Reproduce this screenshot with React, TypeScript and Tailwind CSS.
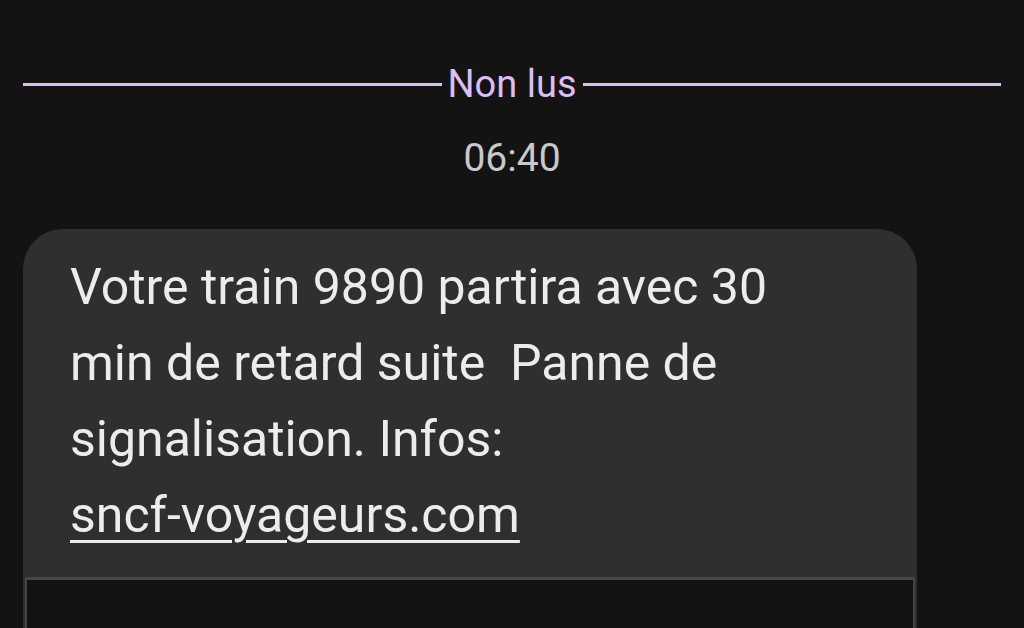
import React from 'react'

const message = {
  time: '06:40',
  lines: ['Votre train 9890 partira avec 30', 'min de retard suite  Panne de', 'signalisation. Infos:'],
  link: 'sncf-voyageurs.com',
}

const App = () => {
  return (
    <div className="w-[1024px] h-[628px] overflow-hidden bg-[#131313] font-['Roboto','Liberation_Sans',sans-serif]">
      {/* séparateur non lus */}
      <div className="flex items-center gap-[6px] px-[23px] pt-[62px]">
        <div className="flex-1 h-[3px] bg-[#d9bdf0]" />
        <span className="text-[38px] leading-[44px] text-[#dcbef3]">Non lus</span>
        <div className="flex-1 h-[3px] bg-[#d9bdf0]" />
      </div>

      {/* heure */}
      <div className="flex justify-center pt-[30px] text-[39px] leading-[44px] text-[#c9c9c9]">
        {message.time}
      </div>

      {/* bulle */}
      <div className="mt-[49px] ml-[23px] w-[894px] rounded-t-[40px] bg-[#2f2f2f]">
        <div className="pl-[47px] pr-[20px] pt-[20px] pb-[24px] text-[50px] leading-[76px] text-[#ececec]">
          {message.lines.map((l) => (
            <div key={l} className="whitespace-pre">{l}</div>
          ))}
          <div className="underline decoration-[3px] underline-offset-[8px]">{message.link}</div>
        </div>
        <div className="mx-[2px] h-[60px] border-t-[3px] border-x-[2px] border-[#454545] bg-[#131313]" />
      </div>
    </div>
  )
}

export default App
